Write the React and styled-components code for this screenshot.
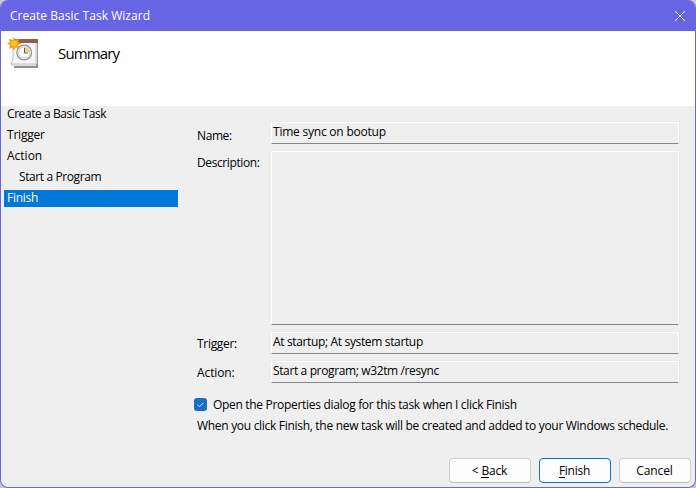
import React from "react";
import styled, { createGlobalStyle } from "styled-components";

const GlobalStyle = createGlobalStyle`
  * { box-sizing: border-box; }
  body { margin: 0; background: #c9c9c9; overflow: hidden; }
`;

const Label = styled.span`
  font-size: ${(p) => p.$size || 12}px;
  letter-spacing: ${(p) => p.$track || 0}px;
  white-space: pre;
`;

const Window = styled.div`
  width: 696px;
  height: 488px;
  border: 1px solid #6865e5;
  border-top: 0;
  border-radius: 8px;
  overflow: hidden;
  background: #efefef;
  display: flex;
  flex-direction: column;
  font: 12px/17px "Open Sans", "Noto Sans", sans-serif;
  color: #000;
`;

const TitleBar = styled.header`
  flex: none;
  height: 31px;
  padding: 0 9px;
  background: #6865e5;
  color: #fff;
  display: flex;
  align-items: center;
  justify-content: space-between;
`;

const CloseButton = styled.button`
  width: 12px;
  height: 12px;
  padding: 0;
  border: 0;
  background: none;
  display: flex;
`;

const Banner = styled.div`
  flex: none;
  height: 75px;
  padding: 6px 0 0 6px;
  background: #fff;
  display: flex;
  align-items: flex-start;
  gap: 19px;
`;

const Heading = styled.h1`
  margin: 6px 0 0;
  font-size: 15px;
  font-weight: 400;
  line-height: 20px;
`;

const Content = styled.div`
  height: 339px;
  display: flex;
`;

const Steps = styled.nav`
  width: 174px;
  margin-left: 3px;
  display: flex;
  flex-direction: column;
  gap: 4px;
`;

const Step = styled.div`
  height: 17px;
  padding-left: ${(p) => (p.$nested ? 15 : 3)}px;
  line-height: 16px;
  background: ${(p) => (p.$current ? "#0078d7" : "transparent")};
  color: ${(p) => (p.$current ? "#fff" : "#000")};
`;

const Form = styled.main`
  width: 500px;
  margin: 16px 0 0 16px;
  display: flex;
  flex-direction: column;
`;

const Field = styled.div`
  display: grid;
  grid-template-columns: 74px 408px;
  margin: 0 0 7px 3px;
`;

const FieldName = styled.label`
  padding-top: ${(p) => p.$top || 5}px;
`;

const Value = styled.div`
  height: ${(p) => p.$height || 22}px;
  padding: 0 0 0 1px;
  border: 1px solid #fdfdfd;
  border-bottom-color: #868686;
  box-shadow: 1px 0 0 #e7e7e7, 0 -1px 0 #e9e9e9;
`;

const CheckRow = styled.label`
  display: flex;
  align-items: center;
  gap: 6px;
  height: 17px;
  margin-top: 6px;
`;

const CheckBox = styled.span`
  width: 13px;
  height: 13px;
  border-radius: 3px;
  background: #196ec4;
  display: flex;
`;

const Note = styled.p`
  margin: 4px 0 0 3px;
`;

const Actions = styled.footer`
  display: flex;
  justify-content: flex-end;
  gap: 8px;
  padding: 13px 4px 0 0;
`;

const Button = styled.button`
  width: ${(p) => p.$width || 72}px;
  height: 25px;
  padding: 0 1px 1px 0;
  border: 1px solid ${(p) => (p.$primary ? "#0078d4" : "#d0d0d0")};
  border-bottom-color: ${(p) => (p.$primary ? "#0078d4" : "#bdbdbd")};
  border-radius: 4px;
  background: #fdfdfd;
  color: #000;
  font: inherit;
`;

const Key = styled.span`
  border-bottom: 1px solid #000;
  display: inline-block;
  line-height: 13px;
`;

const TaskIcon = () => (
  <svg width="32" height="32" viewBox="0 0 32 32">
    <path d="M31 4v27H7v-2h22V4z" fill="#8f8f8f" />
    <path d="M6 3h24v24l-2 1H5l-1-2 2-3z" fill="#f7f7f7" stroke="#a8a8a8" strokeWidth=".8" />
    <path d="M6 2h25v4H6z" fill="#9b5b4c" />
    <path d="M28.5 6v20.5H5" fill="none" stroke="#dcdcdc" />
    <circle cx="17.2" cy="15.5" r="7.4" fill="#eef1f4" stroke="#909396" strokeWidth="1.2" />
    <circle cx="17.2" cy="15.5" r="5.6" fill="#fff" stroke="#b5bac1" strokeWidth=".7" />
    <path d="M17.2 15.5V9.7a5.8 5.8 0 0 1 5.8 5.8z" fill="#f5cf78" />
    <path d="M17.5 11v5H21" fill="none" stroke="#49627c" strokeWidth="1" />
    <path d="M7 0l1.5 3L12 1.5 11 5l3.5 1.5L11 8l1.3 3.5L8.5 10.5 7 14l-1.5-3.5L2 11.8 3.1 8 0 6.5 3 5 1.7 1.7 5.5 3z" fill="#f5a212" />
    <circle cx="7" cy="6.5" r="2.8" fill="#ffc53a" />
  </svg>
);

const steps = [
  { name: "Create a Basic Task", track: -0.42 },
  { name: "Trigger", track: -0.2 },
  { name: "Action", track: 0 },
  { name: "Start a Program", track: -0.4, nested: true },
  { name: "Finish", track: -0.25, current: true },
];

const fields = [
  { name: "Name:", nameTrack: -0.4, value: "Time sync on bootup", track: -0.22, top: 5 },
  { name: "Description:", nameTrack: -0.4, value: "", height: 174, top: 3 },
  { name: "Trigger:", nameTrack: -0.3, value: "At startup; At system startup", track: -0.35, top: 3 },
  { name: "Action:", nameTrack: -0.1, value: "Start a program; w32tm /resync", track: -0.37, top: 3 },
];

export default function App() {
  return (
    <>
      <GlobalStyle />
      <Window>
        <TitleBar>
          <Label $track={0.04}>Create Basic Task Wizard</Label>
          <CloseButton aria-label="Close">
            <svg width="12" height="12" viewBox="0 0 12 12">
              <path d="M1 1l10 10M11 1L1 11" stroke="#fff" strokeWidth="1" />
            </svg>
          </CloseButton>
        </TitleBar>
        <Banner>
          <TaskIcon />
          <Heading><Label $size={15} $track={-0.85}>Summary</Label></Heading>
        </Banner>
        <Content>
          <Steps>
            {steps.map((s) => (
              <Step key={s.name} $nested={s.nested} $current={s.current}>
                <Label $track={s.track}>{s.name}</Label>
              </Step>
            ))}
          </Steps>
          <Form>
            {fields.map((f) => (
              <Field key={f.name}>
                <FieldName $top={f.top}><Label $track={f.nameTrack}>{f.name}</Label></FieldName>
                <Value $height={f.height}><Label $track={f.track}>{f.value}</Label></Value>
              </Field>
            ))}
            <CheckRow>
              <CheckBox>
                <svg width="13" height="13" viewBox="0 0 13 13">
                  <path d="M3.5 6.7l2 2 4-4" fill="none" stroke="#d5e7f8" />
                </svg>
              </CheckBox>
              <Label $track={-0.31}>Open the Properties dialog for this task when I click Finish</Label>
            </CheckRow>
            <Note><Label $track={-0.3}>When you click Finish, the new task will be created and added to your Windows schedule.</Label></Note>
          </Form>
        </Content>
        <Actions>
          <Button $width={82}><Label $track={-0.15}>{"< "}<Key>B</Key>ack</Label></Button>
          <Button $primary><Label $track={-0.25}><Key>F</Key>inish</Label></Button>
          <Button><Label $track={-0.1}>Cancel</Label></Button>
        </Actions>
      </Window>
    </>
  );
}
